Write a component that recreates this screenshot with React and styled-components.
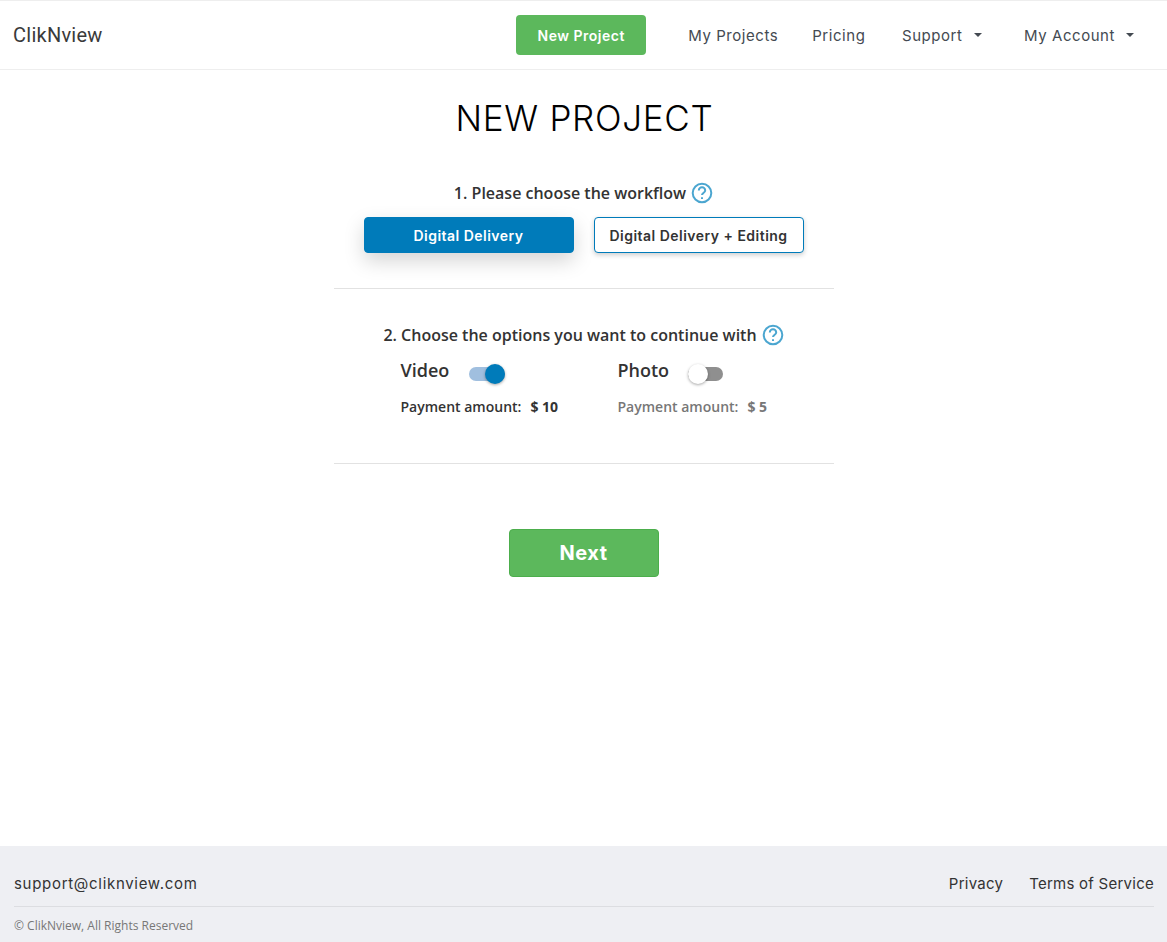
import styled, { createGlobalStyle } from "styled-components";

const GlobalStyle = createGlobalStyle`
    * {
        box-sizing: border-box;
    }
    body {
        margin: 0;
        background: #fff;
        font-family: "Open Sans", sans-serif;
    }
`;

const heading = `"Inter", "Liberation Sans", sans-serif`;

const Page = styled.div`
    min-height: 942px;
    display: flex;
    flex-direction: column;
`;

const Header = styled.header`
    height: 70px;
    display: flex;
    align-items: center;
    justify-content: space-between;
    padding: 0 33px 0 13px;
    border-top: 1px solid #eeeeee;
    border-bottom: 1px solid #eeeeee;
`;

const Logo = styled.a`
    font-family: "Roboto", sans-serif;
    font-size: 20px;
    letter-spacing: 0.25px;
    color: #3a3a3a;
`;

const Nav = styled.nav`
    display: flex;
    align-items: center;
`;

const GreenButton = styled.button`
    width: 130px;
    height: 40px;
    margin-right: 42px;
    background: #5cb85c;
    border: 0;
    border-radius: 4px;
    color: #fff;
    font-family: ${heading};
    font-size: 14px;
    font-weight: 600;
    letter-spacing: 0.5px;
`;

const NavLink = styled.a`
    display: flex;
    align-items: center;
    margin-right: ${props => props.$gap}px;
    color: #444a52;
    font-family: ${heading};
    font-size: 15px;
    font-weight: 400;
    letter-spacing: 0.55px;
`;

const Caret = styled.span`
    width: 0;
    height: 0;
    margin-left: 11px;
    border-left: 4px solid transparent;
    border-right: 4px solid transparent;
    border-top: 4px solid #444a52;
`;

const Main = styled.main`
    flex: 1;
    display: flex;
    flex-direction: column;
    align-items: center;
`;

const Title = styled.h1`
    margin: 26px 0 0;
    padding-left: 2px;
    color: #000;
    font-family: ${heading};
    font-size: 35px;
    line-height: 44px;
    font-weight: 300;
    letter-spacing: 0.7px;
`;

const Section = styled.section`
    width: 500px;
    display: flex;
    flex-direction: column;
    align-items: center;
    padding-top: ${props => props.$top}px;
    padding-bottom: ${props => props.$bottom}px;
    border-bottom: 1px solid #e2e2e2;
`;

const StepTitle = styled.h2`
    display: flex;
    align-items: center;
    gap: 5px;
    margin: 0;
    height: 24px;
    color: #333;
    font-size: 16px;
    font-weight: 600;
`;

const HelpSvg = styled.svg`
    width: 22px;
    height: 22px;
    fill: none;
    stroke: #4ba6d0;
    stroke-width: 2;
`;

const ButtonRow = styled.div`
    display: flex;
    gap: 20px;
    margin-top: 12px;
`;

const WorkflowButton = styled.button`
    width: 210px;
    height: 36px;
    border: 1px solid #007bba;
    border-radius: 4px;
    background: ${props => (props.$active ? "#007bba" : "#fff")};
    color: ${props => (props.$active ? "#fff" : "#333")};
    box-shadow: ${props =>
        props.$active ? "0 8px 20px rgba(0, 0, 0, 0.17)" : "0 2px 5px rgba(0, 0, 0, 0.2)"};
    font-family: ${heading};
    font-size: 14px;
    font-weight: 600;
    letter-spacing: 0.48px;
`;

const Options = styled.div`
    width: 366px;
    display: grid;
    grid-template-columns: 217px 1fr;
    margin-top: 9px;
`;

const OptionHead = styled.div`
    display: flex;
    align-items: center;
    gap: 19px;
    height: 28px;
    color: #333;
    font-size: 18px;
    font-weight: 600;
`;

const Track = styled.span`
    width: ${props => (props.$on ? 36 : 35)}px;
    height: 14px;
    display: flex;
    align-items: center;
    justify-content: ${props => (props.$on ? "flex-end" : "flex-start")};
    border-radius: 7px;
    background: ${props => (props.$on ? "#a0bfdf" : "#8f8f8f")};
    margin-top: 7px;
    margin-left: ${props => (props.$on ? 1 : 0)}px;
`;

const Knob = styled.span`
    width: 20px;
    height: 20px;
    flex: none;
    border-radius: 50%;
    background: ${props => (props.$on ? "#007bba" : "#fff")};
    box-shadow: 0 1px 3px rgba(0, 0, 0, 0.35);
`;

const Amount = styled.div`
    display: flex;
    gap: 9px;
    margin-top: 13px;
    height: 20px;
    color: ${props => (props.$muted ? "#777" : "#333")};
    font-size: 14px;
    line-height: 20px;
    font-weight: 600;
    white-space: nowrap;
`;

const AmountValue = styled.b`
    font-weight: 700;
`;

const NextButton = styled.button`
    width: 150px;
    height: 48px;
    margin-top: 65px;
    background: #5cb85c;
    border: 1px solid #4cae4c;
    border-radius: 4px;
    color: #fff;
    font-family: ${heading};
    font-size: 20px;
    font-weight: 700;
    letter-spacing: 0.5px;
`;

const Footer = styled.footer`
    height: 96px;
    padding: 0 13px 0 14px;
    background: #eeeff3;
`;

const FooterTop = styled.div`
    height: 61px;
    padding-top: 15px;
    display: flex;
    align-items: center;
    justify-content: space-between;
    border-bottom: 1px solid #dcdde1;
    color: #333;
    font-family: ${heading};
    font-size: 15px;
`;

const Email = styled.span`
    letter-spacing: 0.7px;
`;

const FooterLinks = styled.div`
    display: flex;
    gap: 26px;
    letter-spacing: 0.25px;
`;

const Copyright = styled.div`
    margin-top: 10px;
    color: #777;
    font-size: 12px;
    line-height: 18px;
`;

function HelpIcon() {
    return (
        <HelpSvg viewBox="0 0 22 22">
            <circle cx="11" cy="11" r="9.3" />
            <path d="M7.8 8.4a3.2 3.2 0 0 1 6.4 0c0 2.2-3.2 2.4-3.2 4.7" />
            <path d="M11 15.2v1.9" />
        </HelpSvg>
    );
}

function Toggle({ on }) {
    return (
        <Track $on={on}>
            <Knob $on={on} />
        </Track>
    );
}

export default function App() {
    return (
        <Page>
            <GlobalStyle />
            <Header>
                <Logo>ClikNview</Logo>
                <Nav>
                    <GreenButton>New Project</GreenButton>
                    <NavLink $gap={34}>My Projects</NavLink>
                    <NavLink $gap={36.6}>Pricing</NavLink>
                    <NavLink $gap={42.6}>
                        Support
                        <Caret />
                    </NavLink>
                    <NavLink $gap={0}>
                        My Account
                        <Caret />
                    </NavLink>
                </Nav>
            </Header>
            <Main>
                <Title>NEW PROJECT</Title>
                <Section $top={41} $bottom={35}>
                    <StepTitle>
                        1. Please choose the workflow
                        <HelpIcon />
                    </StepTitle>
                    <ButtonRow>
                        <WorkflowButton $active>Digital Delivery</WorkflowButton>
                        <WorkflowButton>Digital Delivery + Editing</WorkflowButton>
                    </ButtonRow>
                </Section>
                <Section $top={34} $bottom={46}>
                    <StepTitle>
                        2. Choose the options you want to continue with
                        <HelpIcon />
                    </StepTitle>
                    <Options>
                        <div>
                            <OptionHead>
                                Video
                                <Toggle on />
                            </OptionHead>
                            <Amount>
                                Payment amount:
                                <AmountValue>$ 10</AmountValue>
                            </Amount>
                        </div>
                        <div>
                            <OptionHead>
                                Photo
                                <Toggle />
                            </OptionHead>
                            <Amount $muted>
                                Payment amount:
                                <AmountValue>$ 5</AmountValue>
                            </Amount>
                        </div>
                    </Options>
                </Section>
                <NextButton>Next</NextButton>
            </Main>
            <Footer>
                <FooterTop>
                    <Email>support@cliknview.com</Email>
                    <FooterLinks>
                        <span>Privacy</span>
                        <span>Terms of Service</span>
                    </FooterLinks>
                </FooterTop>
                <Copyright>© ClikNview, All Rights Reserved</Copyright>
            </Footer>
        </Page>
    );
}
